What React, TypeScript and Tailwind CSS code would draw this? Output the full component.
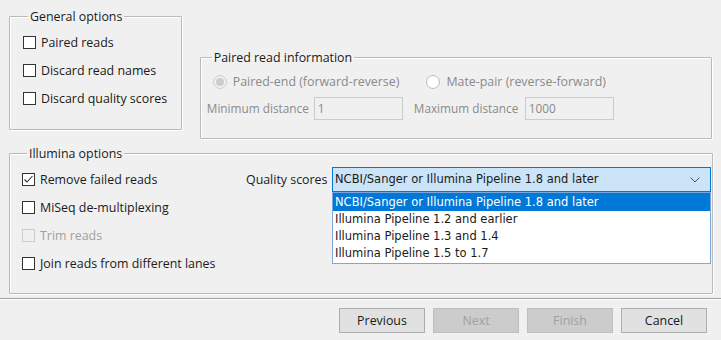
import React from "react";

const ui = "font-['Open_Sans','Noto_Sans',sans-serif] text-[12.4px] leading-[15px]";
const tah = "font-['DejaVu_Sans','Liberation_Sans',sans-serif] text-[11.5px]";

function Box({ checked, disabled }: { checked?: boolean; disabled?: boolean }) {
  return (
    <span
      className={
        "flex h-[13px] w-[13px] items-center justify-center border " +
        (disabled ? "border-[#cccccc] bg-[#f0f0f0]" : "border-[#333333] bg-white")
      }
    >
      {checked && (
        <svg width="11" height="11" viewBox="0 0 11 11">
          <path d="M1.5 5.5 L4 8 L9.5 2" fill="none" stroke="#333" strokeWidth="1.1" />
        </svg>
      )}
    </span>
  );
}

function Check({ label, checked, disabled }: { label: string; checked?: boolean; disabled?: boolean }) {
  return (
    <div className="flex h-[15px] items-center gap-[5px]">
      <Box checked={checked} disabled={disabled} />
      <span className={disabled ? "text-[#a0a0a0]" : "text-[#1a1a1a]"}>{label}</span>
    </div>
  );
}

function Radio({ label, dot }: { label: string; dot?: boolean }) {
  return (
    <div className="flex items-center gap-[6px] text-[#8a8a8a]">
      <span
        className={
          "flex h-[14px] w-[14px] items-center justify-center rounded-full border " +
          (dot ? "border-[#cccccc] bg-[#f0f0f0]" : "border-[#bcbcbc] bg-white")
        }
      >
        {dot && <span className="h-[8px] w-[8px] rounded-full bg-[#cccccc]" />}
      </span>
      <span>{label}</span>
    </div>
  );
}

const group =
  "border border-[#b9b9b9] shadow-[inset_1px_1px_0_#fff,1px_1px_0_#fff] rounded-[1px]";
const legend = "ml-[5px] px-[2px] text-[#1a1a1a]";

function Btn({ label, disabled }: { label: string; disabled?: boolean }) {
  return (
    <button
      className={
        "h-[25px] w-[86px] border " +
        (disabled
          ? "border-[#bfbfbf] bg-[#cccccc] text-[#a0a0a0]"
          : "border-[#adadad] bg-[#e1e1e1] text-[#1a1a1a]")
      }
    >
      {label}
    </button>
  );
}

export default function App() {
  return (
    <div className={"h-[340px] w-[721px] overflow-hidden bg-[#f0f0f0] " + ui}>
      <div className="flex flex-col px-[9px] pt-[9px]">
        {/* top row */}
        <div className="flex items-start">
          <fieldset className={group + " h-[121px] w-[173px] pl-[13px]"}>
            <legend className={legend}>General options</legend>
            <div className="mt-[11px] flex flex-col gap-[13px]">
              <Check label="Paired reads" />
              <Check label="Discard read names" />
              <Check label="Discard quality scores" />
            </div>
          </fieldset>

          <fieldset className={group + " ml-[18px] mt-[41px] h-[89px] w-[513px] pl-[6px]"}>
            <legend className={legend}>Paired read information</legend>
            <div className="ml-[6px] mt-[9px] flex gap-[27px]">
              <Radio label="Paired-end (forward-reverse)" dot />
              <Radio label="Mate-pair (reverse-forward)" />
            </div>
            <div className="mt-[8px] flex items-center whitespace-nowrap text-[11.8px] text-[#8a8a8a]">
              <span className="w-[107px] shrink-0">Minimum distance</span>
              <span className="flex h-[23px] w-[89px] shrink-0 items-center border border-[#cccccc] px-[3px]">1</span>
              <span className="ml-[11px] w-[111px] shrink-0">Maximum distance</span>
              <span className="flex h-[23px] w-[89px] shrink-0 items-center border border-[#cccccc] px-[3px]">1000</span>
            </div>
          </fieldset>
        </div>

        {/* illumina */}
        <fieldset className={group + " mt-[7px] h-[148px] w-[704px] pl-[12px]"}>
          <legend className={legend}>Illumina options</legend>
          <div className="flex">
            <div className="mt-[11px] flex w-[224px] flex-col gap-[13px]">
              <Check label="Remove failed reads" checked />
              <Check label="MiSeq de-multiplexing" />
              <Check label="Trim reads" disabled />
              <Check label="Join reads from different lanes" />
            </div>
            <div className="relative mt-[6px] flex h-[25px] items-center">
              <span className="w-[86px] text-[#1a1a1a]">Quality scores</span>
              <div className="relative">
                <div className={"flex h-[25px] w-[379px] items-center justify-between border border-[#0078d7] bg-[#cce4f7] pl-[2px] pr-[10px] text-[#1a1a1a] " + tah}>
                  <span>NCBI/Sanger or Illumina Pipeline 1.8 and later</span>
                  <svg width="10" height="6" viewBox="0 0 10 6">
                    <path d="M0.5 0.5 L5 5 L9.5 0.5" fill="none" stroke="#555" strokeWidth="1" />
                  </svg>
                </div>
                <div className={"absolute left-0 top-[25px] w-[379px] border border-[#7aa7dc] bg-white pb-[1px] text-[#1a1a1a] " + tah}>
                  <div className="flex h-[18px] items-center bg-[#0078d7] pl-[2px] text-white">
                    NCBI/Sanger or Illumina Pipeline 1.8 and later
                  </div>
                  <div className="flex h-[17px] items-center pl-[2px]">Illumina Pipeline 1.2 and earlier</div>
                  <div className="flex h-[17px] items-center pl-[2px]">Illumina Pipeline 1.3 and 1.4</div>
                  <div className="flex h-[17px] items-center pl-[2px]">Illumina Pipeline 1.5 to 1.7</div>
                </div>
              </div>
            </div>
          </div>
        </fieldset>
      </div>

      {/* separator + buttons */}
      <div className="mt-[4px] border-t border-[#a0a0a0] shadow-[0_1px_0_#fff]" />
      <div className="mt-[9px] flex justify-end gap-[8px] pr-[14px]">
        <Btn label="Previous" />
        <Btn label="Next" disabled />
        <Btn label="Finish" disabled />
        <Btn label="Cancel" />
      </div>
    </div>
  );
}
